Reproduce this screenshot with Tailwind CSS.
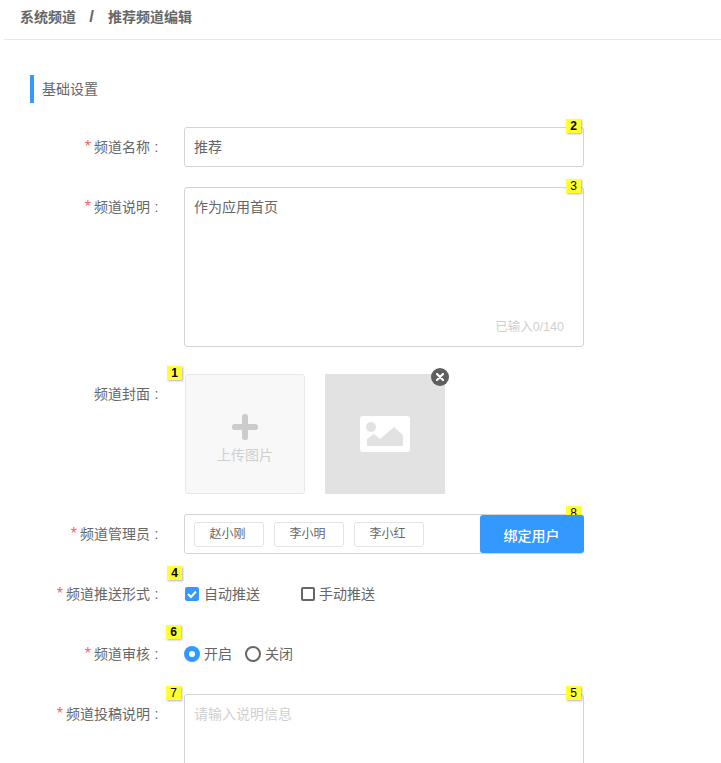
<!DOCTYPE html>
<html lang="zh-CN">
<head>
  <meta charset="UTF-8">
  <title>推荐频道编辑</title>
  <script src="https://cdn.jsdelivr.net/npm/@tailwindcss/browser@4"></script>
</head>
<body class="bg-white h-[763px] overflow-hidden font-['Liberation_Sans','Noto_Sans_CJK_SC',sans-serif] text-[14px] text-[#666]">

  <!-- breadcrumb -->
  <header class="ml-1 h-10 border-b border-[#e8e8e8] pl-4 flex items-center pb-[5px] font-bold text-[14px] text-[#666]">
    <span>系统频道</span>
    <span class="w-8 pr-px text-center text-[17px]">/</span>
    <span>推荐频道编辑</span>
  </header>

  <main class="pl-[30px] pt-[35px]">
    <div class="h-7 border-l-4 border-[#3399ff] pl-2 flex items-center">基础设置</div>

    <!-- 频道名称 -->
    <div class="flex mt-6">
      <div class="w-[132px] h-10 flex items-center justify-end"><span class="text-[#ff5f5f] text-[16px] mr-[3px]">*</span>频道名称<span class="w-3 pl-px text-center">:</span></div>
      <div class="relative ml-[22px] w-[400px] h-10 border border-[#d4d4d4] rounded-[3px] px-[9px] flex items-center">
        推荐
        <span class="absolute -top-[9px] right-[2px] w-[15px] h-[14px] bg-[#ffff33] shadow-[1px_1px_2px_rgba(0,0,0,0.3)] text-black font-bold text-[12px] leading-[14px] text-center">2</span>
      </div>
    </div>

    <!-- 频道说明 -->
    <div class="flex mt-5">
      <div class="w-[132px] h-10 flex items-center justify-end"><span class="text-[#ff5f5f] text-[16px] mr-[3px]">*</span>频道说明<span class="w-3 pl-px text-center">:</span></div>
      <div class="relative ml-[22px] w-[400px] h-40 border border-[#d4d4d4] rounded-[3px] px-[9px] pt-[9px]">
        作为应用首页
        <span class="absolute -top-[9px] right-[2px] w-[15px] h-[14px] bg-[#ffff33] shadow-[1px_1px_2px_rgba(0,0,0,0.3)] text-black text-[12px] leading-[14px] text-center">3</span>
        <span class="absolute right-[19px] bottom-[9px] text-[#d0d0d0] text-[12.5px]">已输入0/140</span>
      </div>
    </div>

    <!-- 频道封面 -->
    <div class="flex mt-[27px]">
      <div class="w-[132px] h-10 flex items-center justify-end"><span>频道封面</span><span class="w-3 pl-px text-center">:</span></div>
      <div class="relative ml-[22px] flex gap-5 pl-px">
        <span class="absolute -top-2 -left-[17px] w-[15px] h-[14px] bg-[#ffff33] shadow-[1px_1px_2px_rgba(0,0,0,0.3)] text-black font-bold text-[12px] leading-[14px] text-center">1</span>
        <div class="w-[120px] h-[120px] bg-[#f8f8f8] border border-[#e8e8e8] rounded-[3px] flex flex-col items-center pt-[39px] text-[#cfcfcf]">
          <svg class="w-[26px] h-[26px]" viewBox="0 0 26 26"><rect x="10" width="6" height="26" rx="2.5" fill="#cccccc"/><rect y="10" width="26" height="6" rx="2.5" fill="#cccccc"/></svg>
          <span class="mt-[5px]">上传图片</span>
        </div>
        <div class="relative w-[120px] h-[120px] bg-[#e2e2e2] flex items-center justify-center">
          <svg class="w-[50px] h-9" viewBox="0 0 50 36"><rect width="50" height="36" rx="3" fill="#fff"/><circle cx="11" cy="11" r="5" fill="#e2e2e2"/><path d="M7 30V23l7-5 6 5 14-12 9 8v11z" fill="#e2e2e2"/></svg>
          <span class="absolute -top-[6px] -right-[4px] w-[18px] h-[18px] rounded-full bg-[#5f5f5f] flex items-center justify-center">
            <svg class="w-2 h-2" viewBox="0 0 8 8"><path d="M1 1l6 6M7 1L1 7" stroke="#fff" stroke-width="2.2" stroke-linecap="round"/></svg>
          </span>
        </div>
      </div>
    </div>

    <!-- 频道管理员 -->
    <div class="flex mt-5">
      <div class="w-[132px] h-10 flex items-center justify-end"><span class="text-[#ff5f5f] text-[16px] mr-[3px]">*</span>频道管理员<span class="w-3 pl-px text-center">:</span></div>
      <div class="relative ml-[22px] w-[400px] h-10 border border-[#d4d4d4] rounded-[3px] flex items-center pl-[9px] gap-[10px] text-[12px]">
        <span class="w-[70px] h-[25px] border border-[#e4e4e4] rounded-[3px] flex items-center justify-center pr-[3px]">赵小刚</span>
        <span class="w-[70px] h-[25px] border border-[#e4e4e4] rounded-[3px] flex items-center justify-center pr-[3px]">李小明</span>
        <span class="w-[70px] h-[25px] border border-[#e4e4e4] rounded-[3px] flex items-center justify-center pr-[3px]">李小红</span>
        <span class="absolute -top-[9px] right-[2px] w-[15px] h-[9px] overflow-hidden bg-[#ffff33] text-black text-[12px] leading-[14px] text-center">8</span>
        <span class="absolute top-0 -right-px w-[104px] h-[38px] bg-[#3399ff] rounded-[3px] text-white text-[14px] font-medium flex items-center justify-center pt-[5px] pr-px">绑定用户</span>
      </div>
    </div>

    <!-- 频道推送形式 -->
    <div class="flex mt-5 h-10 relative">
      <div class="w-[132px] flex items-center justify-end"><span class="text-[#ff5f5f] text-[16px] mr-[3px]">*</span>频道推送形式<span class="w-3 pl-px text-center">:</span></div>
      <div class="relative ml-[22px] flex items-center pl-px">
        <span class="absolute -top-2 -left-[17px] w-[15px] h-[14px] bg-[#ffff33] shadow-[1px_1px_2px_rgba(0,0,0,0.3)] text-black font-bold text-[12px] leading-[14px] text-center">4</span>
        <svg class="w-[14px] h-[14px]" viewBox="0 0 14 14"><rect width="14" height="14" rx="2" fill="#3399ff"/><path d="M3 7l3 3 5-5.5" fill="none" stroke="#fff" stroke-width="2"/></svg>
        <span class="ml-[5px]">自动推送</span>
        <span class="ml-[41px] w-[14px] h-[14px] border-2 border-[#666] rounded-[2px]"></span>
        <span class="ml-1">手动推送</span>
      </div>
    </div>

    <!-- 频道审核 -->
    <div class="flex mt-5 h-10">
      <div class="w-[132px] flex items-center justify-end"><span class="text-[#ff5f5f] text-[16px] mr-[3px]">*</span>频道审核<span class="w-3 pl-px text-center">:</span></div>
      <div class="relative ml-[22px] flex items-center">
        <span class="absolute -top-[9px] -left-[18px] w-[15px] h-[14px] bg-[#ffff33] shadow-[1px_1px_2px_rgba(0,0,0,0.3)] text-black font-bold text-[12px] leading-[14px] text-center">6</span>
        <span class="w-4 h-4 rounded-full bg-[#3399ff] flex items-center justify-center"><span class="w-[6px] h-[6px] rounded-full bg-white"></span></span>
        <span class="ml-1">开启</span>
        <span class="ml-[13px] w-4 h-4 rounded-full border-2 border-[#666]"></span>
        <span class="ml-1">关闭</span>
      </div>
    </div>

    <!-- 频道投稿说明 -->
    <div class="flex mt-5">
      <div class="w-[132px] h-10 flex items-center justify-end"><span class="text-[#ff5f5f] text-[16px] mr-[3px]">*</span>频道投稿说明<span class="w-3 pl-px text-center">:</span></div>
      <div class="relative ml-[22px] w-[400px] h-40 border border-[#d4d4d4] rounded-[3px] px-[9px] pt-[9px] text-[#cfcfcf]">
        请输入说明信息
        <span class="absolute -top-[9px] -left-[19px] w-[15px] h-[14px] bg-[#ffff33] shadow-[1px_1px_2px_rgba(0,0,0,0.3)] text-black text-[12px] leading-[14px] text-center">7</span>
        <span class="absolute -top-[9px] right-[2px] w-[15px] h-[14px] bg-[#ffff33] shadow-[1px_1px_2px_rgba(0,0,0,0.3)] text-black text-[12px] leading-[14px] text-center">5</span>
      </div>
    </div>
  </main>
</body>
</html>
